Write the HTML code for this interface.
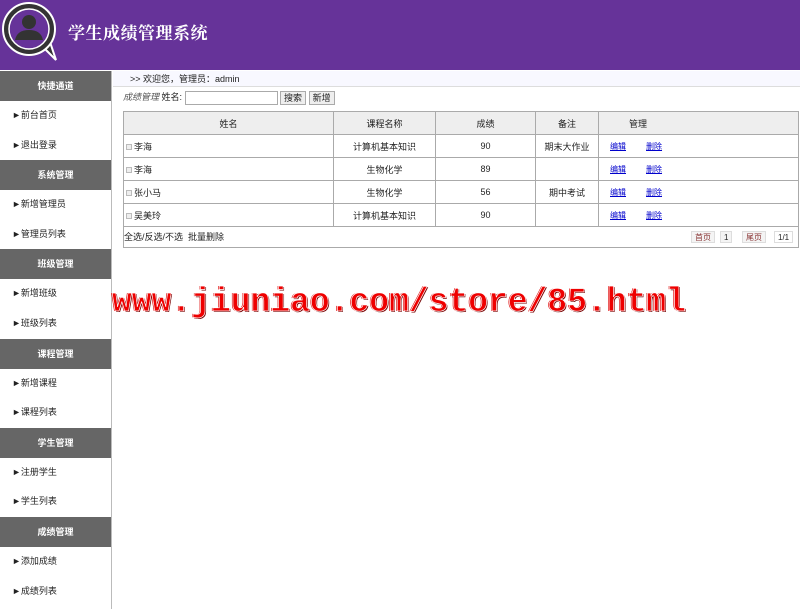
<!DOCTYPE html>
<html><head><meta charset="utf-8"><style>
*{margin:0;padding:0;box-sizing:border-box}
body{width:800px;height:609px;overflow:hidden;background:#fff;font-family:"Liberation Sans","Noto Sans CJK SC",sans-serif;font-size:9px;color:#222;position:relative}
#hd{position:absolute;left:0;top:0;width:800px;height:70px;background:#663399}
#hd .t{position:absolute;left:68px;top:19px;color:#fff;font-size:17px;font-weight:bold;font-family:"Noto Serif CJK SC","Noto Sans CJK SC",serif;letter-spacing:0.5px}
#sb{position:absolute;left:0;top:71px;width:112px;height:538px;border-right:1px solid #bbb}
.h{height:30px;background:#666;color:#fff;font-weight:bold;text-align:center;line-height:30px;font-size:9px}
.i{height:29.6px;line-height:29.6px;padding-left:12px;font-size:9px}
#wel{position:absolute;left:113px;top:71px;width:687px;height:16px;border-bottom:1px solid #ddd;background:#f8f8ff;padding-left:17px;line-height:16px}
#sr{position:absolute;left:123px;top:90px;line-height:15px}
#sr input{width:93px;height:14px;border:1px solid #aaa;vertical-align:middle}
.btn{display:inline-block;border:1px solid #aaa;background:#eee;padding:0 3px;height:14px;line-height:12px;vertical-align:middle}
table{position:absolute;left:123px;top:111px;width:676px;border-collapse:collapse;font-size:9px}
td,th{border:1px solid #aaa;height:23px;text-align:center;font-weight:normal}
th{background:#eee}
td.n{text-align:left;padding-left:2px}
.cb{display:inline-block;width:6px;height:6px;border:1px solid #bbb;background:#eee;margin-right:2px}
a{color:#00c;text-decoration:underline;font-size:8px}
#ft{position:absolute;left:123px;top:226px;width:676px;height:22px;border:1px solid #aaa;border-top:none;line-height:22px}
.pg{position:absolute;top:5px;height:12px;line-height:12px;border:1px solid #ddd;background:#f4f4f4;padding:0 3px;font-size:8px}
#wm{position:absolute;left:112px;top:284px;font-family:"Liberation Mono",monospace;font-weight:bold;font-size:34px;color:#e00;-webkit-text-stroke:0.7px #fff;text-shadow:1px 1px 0 #700,-1px 0 0 #d00;transform:scaleX(0.97);transform-origin:left}
</style></head><body>
<div id="hd">
<svg style="position:absolute;left:0;top:0" width="62" height="64" viewBox="0 0 62 64"><path d="M42 46 L56 60 L50 42Z" fill="#333" stroke="#fff" stroke-width="2"/><circle cx="29" cy="29" r="26" fill="#333" stroke="#fff" stroke-width="2"/><circle cx="29" cy="29" r="20" fill="#663399" stroke="#fff" stroke-width="1.5"/><circle cx="29" cy="22" r="7" fill="#333"/><path d="M15 40 Q17 30 29 30 Q41 30 43 40Z" fill="#333"/></svg>
<div class="t">学生成绩管理系统</div></div>
<div id="sb">
<div class="h">快捷通道</div><div class="i">►前台首页</div><div class="i">►退出登录</div>
<div class="h">系统管理</div><div class="i">►新增管理员</div><div class="i">►管理员列表</div>
<div class="h">班级管理</div><div class="i">►新增班级</div><div class="i">►班级列表</div>
<div class="h">课程管理</div><div class="i">►新增课程</div><div class="i">►课程列表</div>
<div class="h">学生管理</div><div class="i">►注册学生</div><div class="i">►学生列表</div>
<div class="h">成绩管理</div><div class="i">►添加成绩</div><div class="i">►成绩列表</div>
</div>
<div id="wel">&gt;&gt; 欢迎您，管理员：admin</div>
<div id="sr"><i style="color:#555">成绩管理</i> 姓名: <input> <span class="btn">搜索</span> <span class="btn">新增</span></div>
<table>
<tr><th style="width:210px">姓名</th><th style="width:102px">课程名称</th><th style="width:100px">成绩</th><th style="width:63px">备注</th><th style="text-align:left;padding-left:30px">管理</th></tr>
<tr><td class="n"><span class="cb"></span>李海</td><td>计算机基本知识</td><td>90</td><td>期末大作业</td><td style="text-align:left;padding-left:11px"><a>编辑</a>&nbsp;&nbsp;&nbsp;&nbsp;&nbsp;&nbsp;&nbsp;&nbsp;<a>删除</a></td></tr>
<tr><td class="n"><span class="cb"></span>李海</td><td>生物化学</td><td>89</td><td></td><td style="text-align:left;padding-left:11px"><a>编辑</a>&nbsp;&nbsp;&nbsp;&nbsp;&nbsp;&nbsp;&nbsp;&nbsp;<a>删除</a></td></tr>
<tr><td class="n"><span class="cb"></span>张小马</td><td>生物化学</td><td>56</td><td>期中考试</td><td style="text-align:left;padding-left:11px"><a>编辑</a>&nbsp;&nbsp;&nbsp;&nbsp;&nbsp;&nbsp;&nbsp;&nbsp;<a>删除</a></td></tr>
<tr><td class="n"><span class="cb"></span>吴美玲</td><td>计算机基本知识</td><td>90</td><td></td><td style="text-align:left;padding-left:11px"><a>编辑</a>&nbsp;&nbsp;&nbsp;&nbsp;&nbsp;&nbsp;&nbsp;&nbsp;<a>删除</a></td></tr>
</table>
<div id="ft">全选/反选/不选&nbsp; 批量删除
<span class="pg" style="left:567px;color:#833">首页</span><span class="pg" style="left:596px">1</span><span class="pg" style="left:618px;color:#833">尾页</span><span class="pg" style="left:650px;background:#fff">1/1</span></div>
<div id="wm">www.jiuniao.com/store/85.html</div>
</body></html>
